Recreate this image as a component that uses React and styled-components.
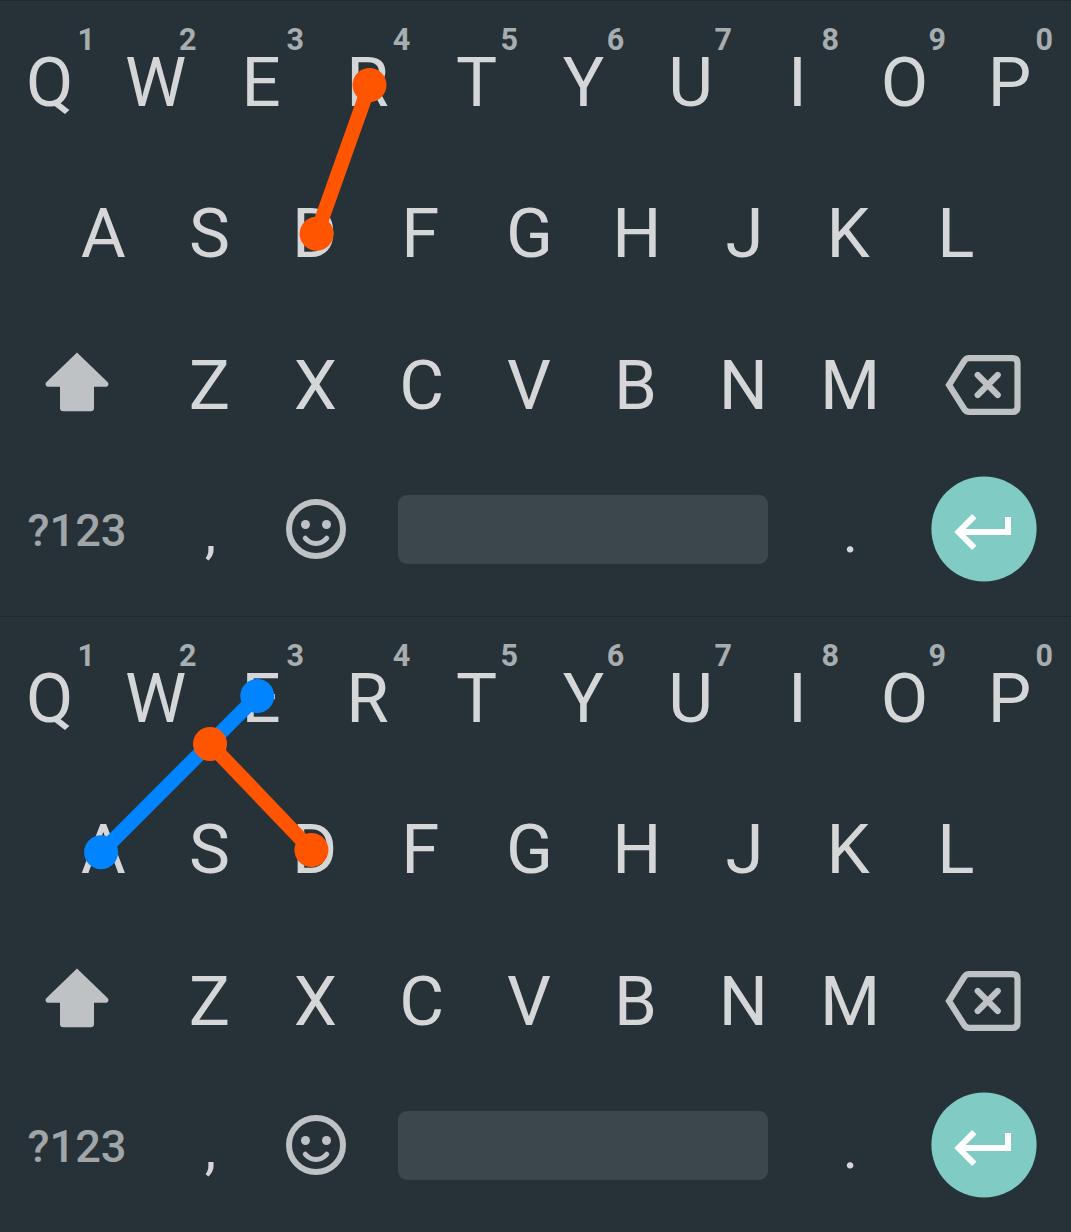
import React from "react";
import styled, { createGlobalStyle } from "styled-components";

const GlobalStyle = createGlobalStyle`
  * { box-sizing: border-box; }
  body { margin: 0; background: #263238; }
`;

const Screen = styled.main`
  width: 1071px;
  height: 1232px;
  display: flex;
  flex-direction: column;
  overflow: hidden;
  background: #263238;
  font-family: Roboto, "Liberation Sans", sans-serif;
`;

const Keyboard = styled.section`
  position: relative;
  height: 616px;
  border-top: 1px solid #20292d;
  padding-top: 6px;
  display: flex;
  flex-direction: column;
`;

const Row = styled.div`
  display: grid;
  flex: none;
  grid-template-columns: ${(p) => p.$columns};
  height: ${(p) => p.$height || 151}px;
  padding-left: ${(p) => p.$inset || 0}px;
  margin-left: ${(p) => p.$outdent || 0}px;
`;

const Key = styled.div`
  position: relative;
  display: flex;
  align-items: center;
  justify-content: center;
  padding-left: ${(p) => Math.max(0, (p.$optical || 0) * 2)}px;
  padding-right: ${(p) => Math.max(0, (p.$optical || 0) * -2)}px;
  color: #d4d6d8;
  font-size: 69px;
  line-height: 1;
  user-select: none;
`;

const Hint = styled.span`
  position: absolute;
  top: 18px;
  right: ${(p) => p.$right}px;
  color: #a8adaf;
  font-size: 30.5px;
  font-weight: 700;
  line-height: 30px;
`;

const ModeKey = styled(Key)`
  padding-top: 3px;
  color: #a0a5a8;
  font-size: 45.200px;
  font-weight: 500;
`;

const PunctuationKey = styled(Key)`
  font-size: 58px;
  padding-top: 5px;
`;

const IconKey = styled(Key)`
  padding-bottom: ${(p) => p.$lift || 0}px;
  color: #bec2c5;

  svg { display: block; }
`;

const SpaceBar = styled.div`
  width: 370px;
  height: 69px;
  border-radius: 9px;
  background: #3c474d;
`;

const TraceLayer = styled.svg`
  position: absolute;
  left: 0;
  top: -1px;
  pointer-events: none;
`;

const ORANGE = "#ff5500";
const BLUE = "#0084ff";

const ShiftIcon = () => (
  <svg width="64" height="60" viewBox="0 0 64 60" fill="currentColor">
    <path d="M32 .5 63 30.5Q64.500 33.500 61.500 34.700H49V56Q49 59.300 45.700 59.300H18.300Q15 59.300 15 56V34.700H2.500Q-.5 33.500 1 30.500Z" />
  </svg>
);

const BackspaceIcon = () => (
  <svg width="76" height="60" viewBox="0 0 76 60" fill="none" stroke="currentColor">
    <path d="M4 30 19.200 6Q21 3.200 24.300 3.200H67.500Q72.500 3.200 72.500 8.200V51.800Q72.500 56.800 67.500 56.800H24.300Q21 56.800 19.200 54Z" strokeWidth="6.200" />
    <path d="M32.700 20 52.700 40M52.700 20 32.700 40" strokeWidth="6.200" strokeLinecap="round" />
  </svg>
);

const SmileIcon = () => (
  <svg width="60" height="60" viewBox="0 0 60 60" fill="none" stroke="currentColor">
    <circle cx="30" cy="30" r="27" strokeWidth="6" />
    <circle cx="19.500" cy="25.500" r="4.500" fill="currentColor" stroke="none" />
    <circle cx="40.500" cy="25.500" r="4.500" fill="currentColor" stroke="none" />
    <path d="M19.300 39.200Q23.500 44.400 30 44.400T40.700 39.200" strokeWidth="5" strokeLinecap="round" />
  </svg>
);

const EnterIcon = () => (
  <svg width="108" height="107" viewBox="0 0 108 107" fill="none" stroke="#fff" strokeWidth="6">
    <circle cx="54" cy="53" r="52.600" fill="#80cbc4" stroke="none" />
    <path d="M78 41V56H29" />
    <path d="M44.300 40.200 28.500 56 44.300 71.800" />
  </svg>
);

function Trace({ from, to, color }) {
  return (
    <g stroke={color} fill={color}>
      <line x1={from[0]} y1={from[1]} x2={to[0]} y2={to[1]} strokeWidth="14.500" />
      <circle cx={from[0]} cy={from[1]} r="17" stroke="none" />
      <circle cx={to[0]} cy={to[1]} r="17" stroke="none" />
    </g>
  );
}

const OPTICAL = {
  Q: 1.2, E: -1.5, R: -2, P: -2,
  S: -0.5, D: -2, F: -3, G: -0.5, J: 1, K: -2, L: -1,
  X: -0.7, C: -1.2, V: -0.8, B: -1,
};

const HINT_RIGHT = { 0: 7, 1: 12.5, 3: 12.7, 5: 12.7 };

const letters = (text) =>
  text.split("").map((c) => (
    <Key key={c} $optical={OPTICAL[c]}>
      {c}
    </Key>
  ));

function KeyboardPanel({ traces }) {
  return (
    <Keyboard>
      <Row $columns="repeat(10, 107px)" $outdent={-5}>
        {"QWERTYUIOP".split("").map((c, i) => (
          <Key key={c} $optical={OPTICAL[c]}>
            {c}
            <Hint $right={HINT_RIGHT[i] ?? 12}>{(i + 1) % 10}</Hint>
          </Key>
        ))}
      </Row>
      <Row $columns="repeat(9, 106.700px)" $height={150} $inset={50}>
        {letters("ASDFGHJKL")}
      </Row>
      <Row $columns="158px repeat(7, 106.800px) 158px" $height={155} $outdent={-2}>
        <IconKey $lift={7}><ShiftIcon /></IconKey>
        {letters("ZXCVBNM")}
        <IconKey $lift={1}><BackspaceIcon /></IconKey>
      </Row>
      <Row $columns="158px 107px 106px 428px 107px 160px" $height={133} $outdent={-2}>
        <ModeKey>?123</ModeKey>
        <PunctuationKey $optical={1}>,</PunctuationKey>
        <IconKey $lift={2}><SmileIcon /></IconKey>
        <IconKey><SpaceBar /></IconKey>
        <PunctuationKey>.</PunctuationKey>
        <IconKey><EnterIcon /></IconKey>
      </Row>
      <TraceLayer width="1071" height="616" viewBox="0 0 1071 616">
        {traces.map((t, i) => <Trace key={i} {...t} />)}
      </TraceLayer>
    </Keyboard>
  );
}

const firstTraces = [{ from: [369.5, 85], to: [316.6, 233.7], color: ORANGE }];
const secondTraces = [
  { from: [257.3, 80], to: [101.1, 236.3], color: BLUE },
  { from: [210, 128], to: [311.4, 234], color: ORANGE },
];

export default function App() {
  return (
    <Screen>
      <GlobalStyle />
      <KeyboardPanel traces={firstTraces} />
      <KeyboardPanel traces={secondTraces} />
    </Screen>
  );
}
